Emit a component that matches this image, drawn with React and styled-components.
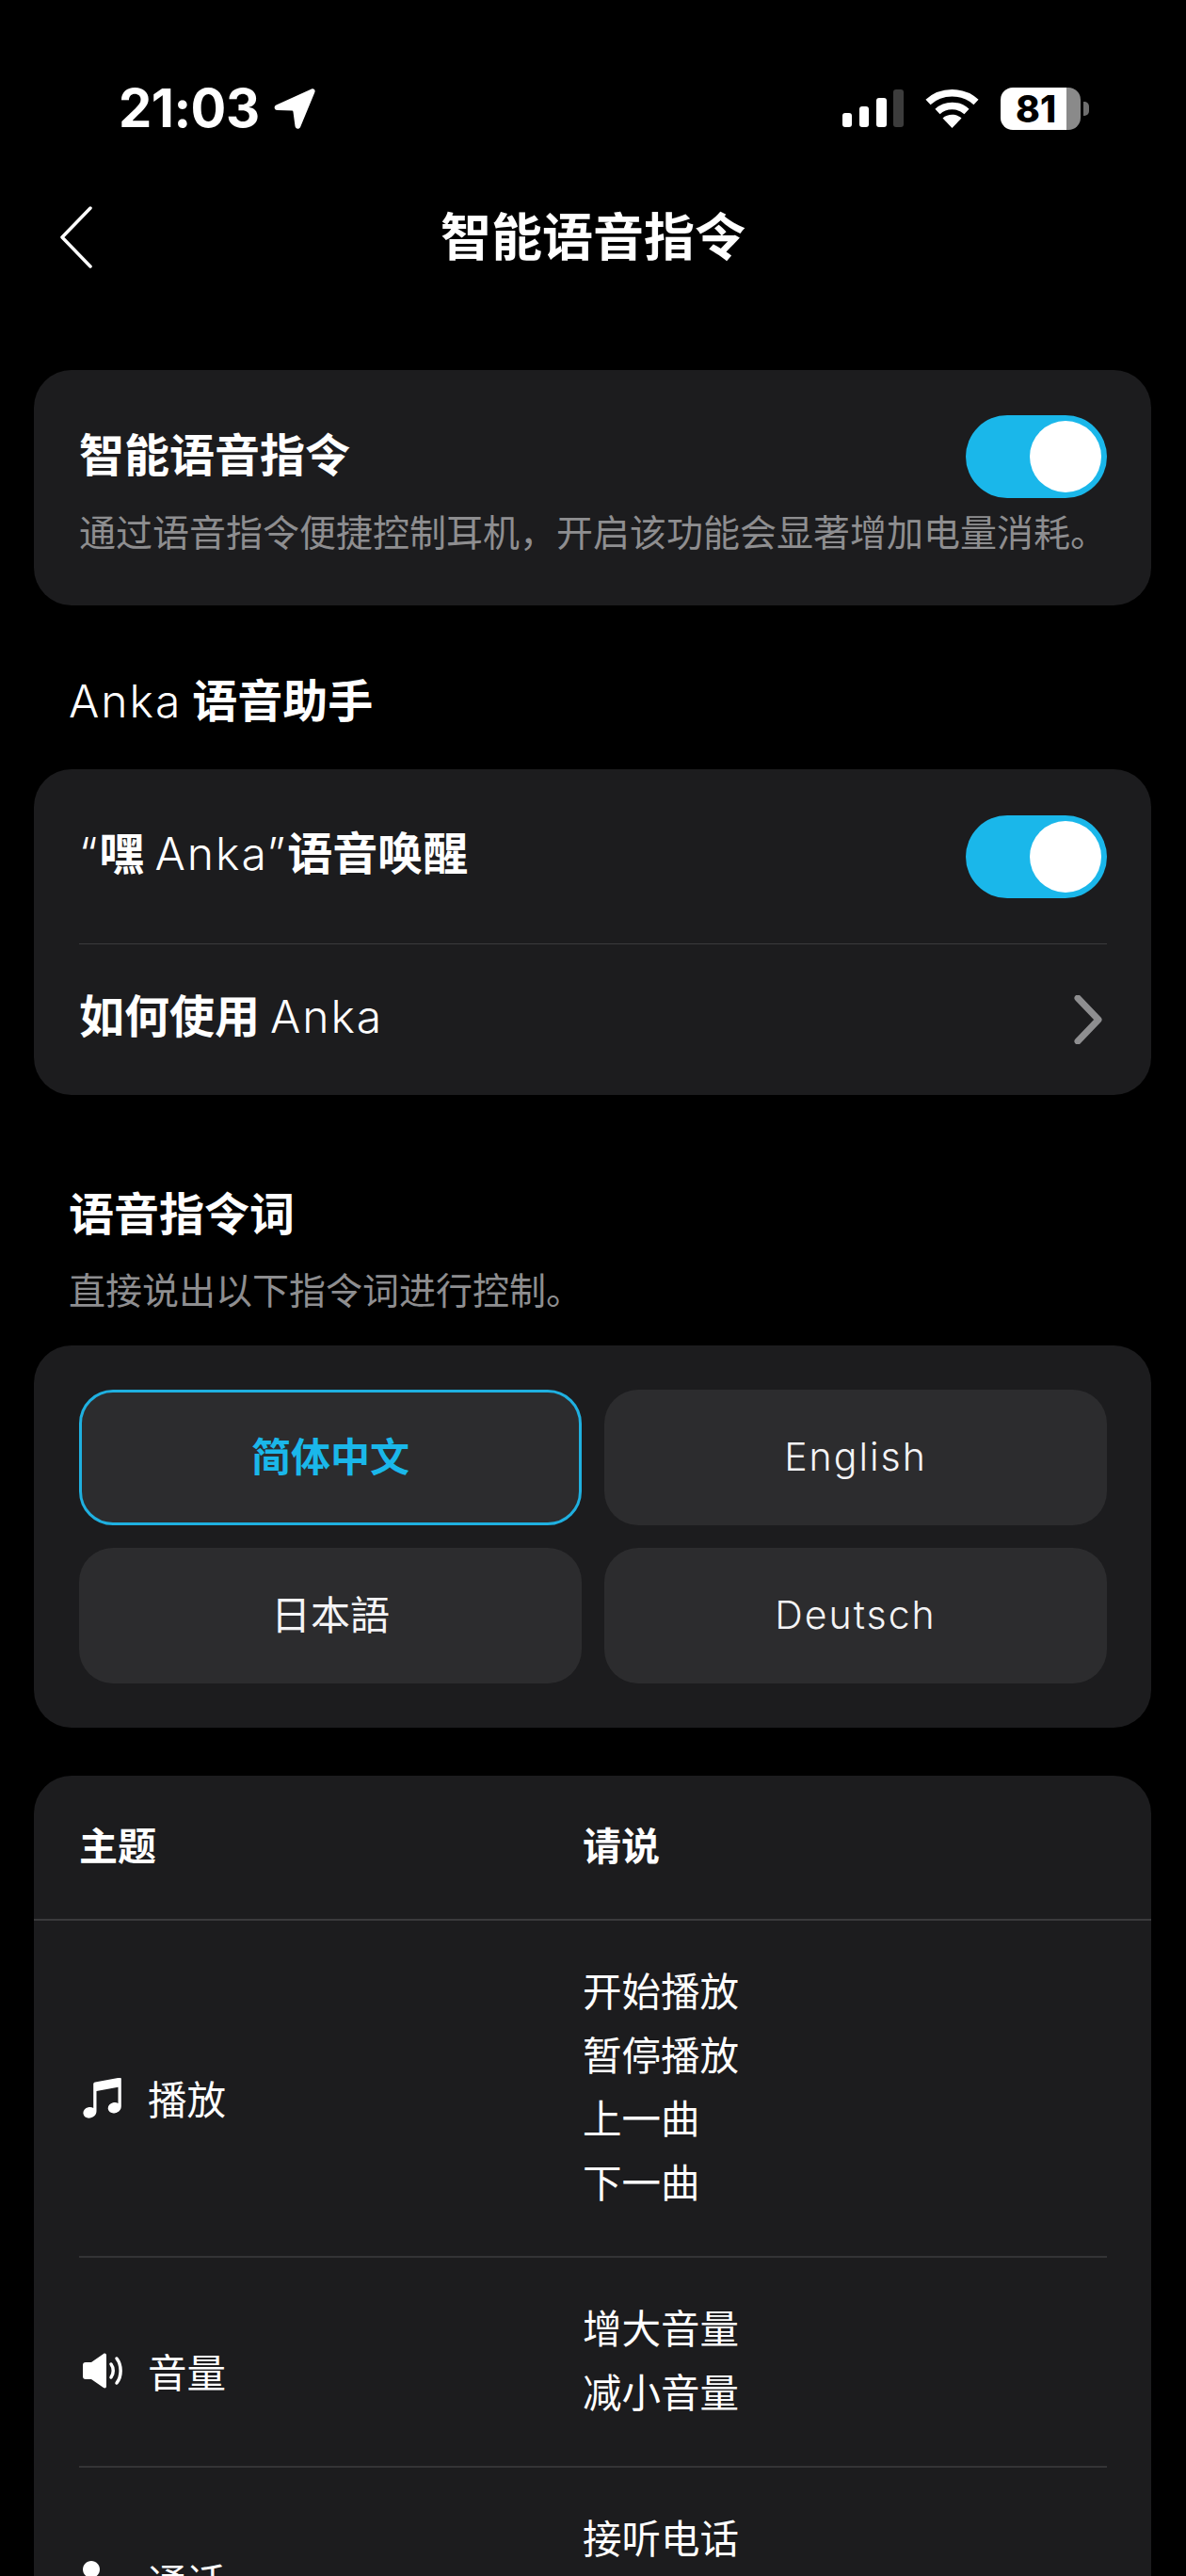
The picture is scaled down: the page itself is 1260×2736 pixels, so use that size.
import React from 'react';
import styled, { createGlobalStyle } from 'styled-components';

const GlobalStyle = createGlobalStyle`
  html, body {
    margin: 0;
    padding: 0;
    background: #000;
  }
  body {
    font-family: "Inter", "Noto Sans CJK SC", sans-serif;
    color: #fff;
  }
`;

const Screen = styled.div`
  width: 1260px;
  height: 2736px;
  overflow: hidden;
  background: #000;
  display: flex;
  flex-direction: column;
`;

const StatusBar = styled.div`
  height: 76px;
  padding: 77px 112px 0 126px;
  display: flex;
  align-items: center;
  justify-content: space-between;
`;

const TimeGroup = styled.div`
  display: flex;
  align-items: center;
  gap: 14px;
`;

const Time = styled.span`
  font-family: "Inter", sans-serif;
  font-weight: 700;
  font-size: 56px;
  line-height: 76px;
  letter-spacing: -0.5px;
`;

const StatusIcons = styled.div`
  display: flex;
  align-items: center;
  gap: 23px;
`;

const Battery = styled.div`
  position: relative;
  width: 85px;
  height: 45px;
  border-radius: 13px;
  background: linear-gradient(to right, #fff 82%, #8a8a8a 82%);
  display: flex;
  align-items: center;
  padding-left: 16px;
  box-sizing: border-box;
  color: #000;
  font-family: "Inter", sans-serif;
  font-weight: 800;
  font-size: 39px;
  &::after {
    content: '';
    position: absolute;
    right: -9px;
    top: 15px;
    width: 6px;
    height: 15px;
    border-radius: 0 5px 5px 0;
    background: #6e6e6e;
  }
`;

const NavBar = styled.div`
  margin-top: 61px;
  height: 112px;
  display: flex;
  align-items: center;
  justify-content: center;
  position: relative;
`;

const BackButton = styled.div`
  position: absolute;
  left: 63px;
  top: 5px;
  display: flex;
`;

const PageTitle = styled.h1`
  margin: 0;
  font-family: "Noto Sans CJK SC", sans-serif;
  font-weight: 700;
  font-size: 54px;
  line-height: 70px;
`;

const Content = styled.div`
  margin-top: 109px;
  padding: 0 37px 0 36px;
  display: flex;
  flex-direction: column;
`;

const Card = styled.div`
  background: #1c1c1e;
  border-radius: 40px;
  margin-top: ${(p) => p.$top || 0}px;
`;

const IntroRow = styled.div`
  height: 250px;
  box-sizing: border-box;
  padding: 48px 47px 0 48px;
`;

const RowHead = styled.div`
  display: flex;
  align-items: center;
  justify-content: space-between;
`;

const RowTitle = styled.div`
  margin-bottom: 10px;
  font-family: "Noto Sans CJK SC", sans-serif;
  font-weight: 600;
  font-size: 48px;
  line-height: 70px;
  white-space: pre;
`;

const Latin = styled.span`
  font-family: "Inter", sans-serif;
  font-weight: 300;
  letter-spacing: 2px;
`;

const Hint = styled.div`
  margin-top: 6px;
  font-family: "Noto Sans CJK SC", sans-serif;
  font-weight: 400;
  font-size: 39px;
  line-height: 56px;
  color: #8e8e90;
  white-space: nowrap;
`;

const Toggle = styled.div`
  width: 150px;
  height: 88px;
  border-radius: 44px;
  background: #1ab7ea;
  position: relative;
  flex-shrink: 0;
  &::after {
    content: '';
    position: absolute;
    right: 6px;
    top: 6px;
    width: 76px;
    height: 76px;
    border-radius: 50%;
    background: #fff;
  }
`;

const SectionTitle = styled.div`
  margin-top: ${(p) => p.$top}px;
  padding-left: 37px;
  font-family: "Noto Sans CJK SC", sans-serif;
  font-weight: 600;
  font-size: 48px;
  line-height: 70px;
`;

const SectionHint = styled(Hint)`
  margin-top: 19px;
  padding-left: 37px;
`;

const SettingsRow = styled.div`
  height: ${(p) => p.$height}px;
  margin: 0 47px 0 48px;
  display: flex;
  align-items: center;
  justify-content: space-between;
  border-bottom: ${(p) => (p.$divider ? '1px solid #3a3a3c' : 'none')};
  box-sizing: border-box;
`;

const TabGrid = styled.div`
  padding: 47px 47px 47px 48px;
  display: grid;
  grid-template-columns: 534px 534px;
  grid-auto-rows: 144px;
  column-gap: 24px;
  row-gap: 24px;
`;

const Tab = styled.div`
  border-radius: 36px;
  background: #2c2c2e;
  box-sizing: border-box;
  border: ${(p) => (p.$active ? '3px solid #1fb0e0' : 'none')};
  padding-bottom: ${(p) => (p.$latin ? '2px' : '7px')};
  display: flex;
  align-items: center;
  justify-content: center;
  font-family: ${(p) => (p.$latin ? '"Inter", sans-serif' : '"Noto Sans CJK SC", sans-serif')};
  font-weight: ${(p) => (p.$active ? 700 : p.$latin ? 300 : 400)};
  font-size: ${(p) => (p.$latin ? '41px' : '42px')};
  letter-spacing: ${(p) => (p.$latin ? '2px' : '0')};
  color: ${(p) => (p.$active ? '#1ab7ea' : '#f4f4f6')};
`;

const TableHead = styled.div`
  height: 144px;
  padding: 0 48px 8px;
  display: grid;
  grid-template-columns: 535px 1fr;
  align-items: center;
  border-bottom: 2px solid #3a3a3c;
  font-family: "Noto Sans CJK SC", sans-serif;
  font-weight: 700;
  font-size: 41px;
`;

const TableRow = styled.div`
  margin: 0 47px 0 48px;
  padding: 40px 0 46px;
  display: grid;
  grid-template-columns: 535px 1fr;
  align-items: center;
  border-bottom: 2px solid #343436;
  font-family: "Noto Sans CJK SC", sans-serif;
  font-weight: 400;
  font-size: 41.5px;
`;

const Topic = styled.div`
  padding-top: 25px;
  display: flex;
  align-items: center;
  gap: 23px;
  line-height: 68px;
`;

const TopicIcon = styled.div`
  width: 46px;
  margin-left: 4px;
  display: flex;
`;

const Phrases = styled.div`
  display: flex;
  flex-direction: column;
  line-height: 67.5px;
`;

const LocationArrow = () => (
  <svg width="46" height="44" viewBox="0 0 46 44">
    <path d="M41 1.5 3.5 18.6c-3 1.4-2.2 5.4 1 5.5l15.6.5c.8 0 1.3.6 1.4 1.3l2 15.2c.4 3 4.3 3.6 5.6.8L44.4 5c1-2.4-1.2-4.5-3.4-3.5Z" fill="#fff" />
  </svg>
);

const SignalIcon = () => (
  <svg width="65" height="41" viewBox="0 0 65 41">
    <rect x="0" y="25" width="10" height="15" rx="3" fill="#fff" />
    <rect x="18" y="18" width="10" height="22" rx="3" fill="#fff" />
    <rect x="36" y="9" width="11" height="31" rx="3" fill="#fff" />
    <rect x="54" y="0" width="11" height="40" rx="3" fill="#3c3c3c" />
  </svg>
);

const WifiIcon = () => (
  <svg width="57" height="42" viewBox="0 0 57 42" fill="none">
    <path d="M3 14.5C17 1.5 40 1.500 54 14.500" stroke="#fff" strokeWidth="7.500" />
    <path d="M13 24.500C21.500 16.500 35.500 16.500 44 24.500" stroke="#fff" strokeWidth="7.500" />
    <path d="M28.500 42 18.500 31.500C24 26.500 33 26.500 38.500 31.500Z" fill="#fff" />
  </svg>
);

const BackIcon = () => (
  <svg width="36" height="66" viewBox="0 0 36 66" fill="none">
    <path d="M33 2 3 33l30 31" stroke="#fff" strokeWidth="3.500" strokeLinecap="round" strokeLinejoin="round" />
  </svg>
);

const ChevronIcon = () => (
  <svg width="36" height="52" viewBox="0 0 36 52" fill="none">
    <path d="M5 3 27 26 5 49" stroke="#8e8e90" strokeWidth="7" strokeLinecap="round" strokeLinejoin="round" />
  </svg>
);

const MusicIcon = () => (
  <svg width="42" height="44" viewBox="0 0 42 44">
    <path d="M40 0.500 13 5.500c-1 .2-1.800 1-1.800 2.100V33c-1.500-1-3.500-1.300-5.500-.8C2 33 0 36 .5 39c.5 3.500 4 5.200 7.500 4.500 3.800-.8 6.500-3.400 6.500-7.500V15l23-4.200V28c-1.500-1-3.500-1.200-5.500-.7-3.600 1-5.700 3.800-5.200 6.800.5 3.300 4 5 7.500 4.200 3.800-.8 6.500-3.500 6.500-7.300V2c0-1-.9-1.700-1.800-1.500Z" fill="#fff" />
  </svg>
);

const SpeakerIcon = () => (
  <svg width="44" height="38" viewBox="0 0 44 38" fill="none">
    <path d="M3 10h6L22 1c1.500-1 3-.2 3 1.500v33c0 1.700-1.500 2.500-3 1.500L9 28H3c-2 0-3-1-3-3V13c0-2 1-3 3-3Z" fill="#fff" />
    <path d="M30 12c3 4 3 10 0 14" stroke="#fff" strokeWidth="3.500" strokeLinecap="round" />
    <path d="M36 6c5.500 7 5.500 19 0 26" stroke="#fff" strokeWidth="3.500" strokeLinecap="round" />
  </svg>
);

const CallIcon = () => (
  <svg width="42" height="42" viewBox="0 0 42 42">
    <path d="M9 0c5 0 9 4 9 9s-4 9-9 9-9-4-9-9 4-9 9-9Z" fill="#fff" />
    <path d="M5 14c2 12 10 21 22 24 5 1 9-2 9-6l-10-6-5 4c-4-3-7-7-8-11l-8-5Z" fill="#fff" />
  </svg>
);

const commandRows = [
  { topic: '播放', Icon: MusicIcon, phrases: ['开始播放', '暂停播放', '上一曲', '下一曲'] },
  { topic: '音量', Icon: SpeakerIcon, phrases: ['增大音量', '减小音量'] },
  { topic: '通话', Icon: CallIcon, phrases: ['接听电话', '挂断电话'] },
];

const App = () => (
  <Screen>
    <GlobalStyle />
    <StatusBar>
      <TimeGroup>
        <Time>21:03</Time>
        <LocationArrow />
      </TimeGroup>
      <StatusIcons>
        <SignalIcon />
        <WifiIcon />
        <Battery>81</Battery>
      </StatusIcons>
    </StatusBar>

    <NavBar>
      <BackButton>
        <BackIcon />
      </BackButton>
      <PageTitle>智能语音指令</PageTitle>
    </NavBar>

    <Content>
      <Card>
        <IntroRow>
          <RowHead>
            <RowTitle>智能语音指令</RowTitle>
            <Toggle />
          </RowHead>
          <Hint>通过语音指令便捷控制耳机，开启该功能会显著增加电量消耗。</Hint>
        </IntroRow>
      </Card>

      <SectionTitle $top={63}>
        <Latin>Anka</Latin> 语音助手
      </SectionTitle>

      <Card $top={37}>
        <SettingsRow $height={186} $divider>
          <RowTitle>
            <Latin>“</Latin>嘿 <Latin>Anka”</Latin>语音唤醒
          </RowTitle>
          <Toggle />
        </SettingsRow>
        <SettingsRow $height={160}>
          <RowTitle>
            如何使用 <Latin>Anka</Latin>
          </RowTitle>
          <ChevronIcon />
        </SettingsRow>
      </Card>

      <SectionTitle $top={88}>语音指令词</SectionTitle>
      <SectionHint>直接说出以下指令词进行控制。</SectionHint>

      <Card $top={33}>
        <TabGrid>
          <Tab $active>简体中文</Tab>
          <Tab $latin>English</Tab>
          <Tab>日本語</Tab>
          <Tab $latin>Deutsch</Tab>
        </TabGrid>
      </Card>

      <Card $top={51}>
        <TableHead>
          <span>主题</span>
          <span>请说</span>
        </TableHead>
        {commandRows.map(({ topic, Icon, phrases }) => (
          <TableRow key={topic}>
            <Topic>
              <TopicIcon>
                <Icon />
              </TopicIcon>
              {topic}
            </Topic>
            <Phrases>
              {phrases.map((phrase) => (
                <span key={phrase}>{phrase}</span>
              ))}
            </Phrases>
          </TableRow>
        ))}
      </Card>
    </Content>
  </Screen>
);

export default App;
